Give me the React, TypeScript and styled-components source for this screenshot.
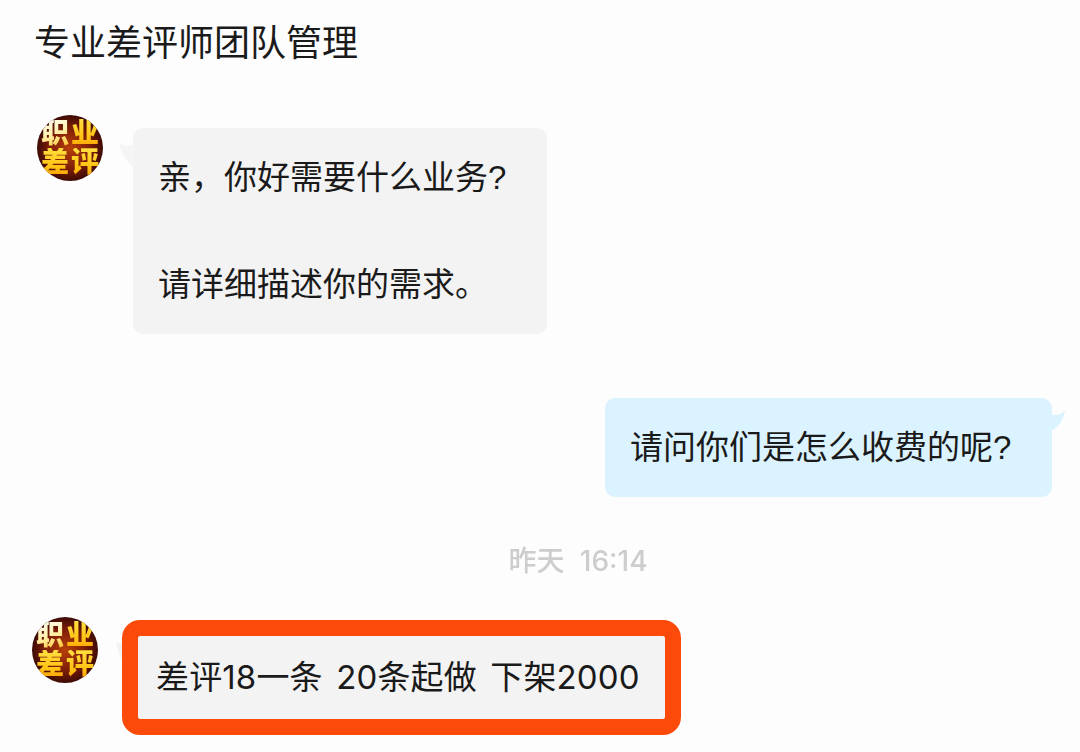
import React from "react";
import styled, { createGlobalStyle } from "styled-components";

const Global = createGlobalStyle`
  html, body { margin: 0; padding: 0; background: #fdfdfd; }
  body { font-family: "Liberation Sans", "Noto Sans CJK SC", sans-serif; color: #1a1a1a; }
`;

const Page = styled.main`
  width: 1080px;
  height: 752px;
  overflow: hidden;
  background: #fdfdfd;
  display: flex;
  flex-direction: column;
`;

const Title = styled.h1`
  margin: 0;
  padding: 21px 0 0 34px;
  height: 95px;
  box-sizing: border-box;
  font-size: 36px;
  line-height: 46px;
  font-weight: 400;
  color: #1a1a1a;
`;

const Row = styled.section<{ $left?: number; $top?: number; $gap?: number }>`
  display: flex;
  align-items: flex-start;
  gap: ${(p) => p.$gap ?? 30}px;
  padding-left: ${(p) => p.$left ?? 37}px;
  margin-top: ${(p) => p.$top ?? 0}px;
`;

const RightRow = styled.section`
  display: flex;
  justify-content: flex-end;
  padding-right: 28px;
  margin-top: 64px;
`;

const Avatar = styled.div`
  width: 66px;
  height: 66px;
  flex: none;
  border-radius: 50%;
  overflow: hidden;
  background: radial-gradient(circle at 50% 50%, #b8400a 0%, #7a1c06 45%, #3a0a05 72%, #120403 100%);
  display: grid;
  grid-template-columns: 30px 30px;
  grid-template-rows: 29px 29px;
  justify-content: center;
  align-content: center;
  place-items: center;
`;

const AvatarChar = styled.span<{ $light?: boolean }>`
  font-size: 28px;
  line-height: 29px;
  font-weight: 900;
  background: ${(p) =>
    p.$light
      ? "linear-gradient(160deg, #ffffff 0%, #fff0a8 50%, #ffc020 100%)"
      : "linear-gradient(180deg, #ffe040 0%, #ffc010 70%, #ff9a08 100%)"};
  -webkit-background-clip: text;
  background-clip: text;
  color: transparent;
  filter: blur(0.5px);
`;

const Bubble = styled.div`
  position: relative;
  background: #f3f3f3;
  border-radius: 10px;
  font-size: 33px;
  line-height: 53.5px;
  color: #1a1a1a;
  white-space: pre-line;
`;

const IncomingBubble = styled(Bubble)`
  width: 414px;
  height: 206px;
  box-sizing: border-box;
  padding: 23px 0 0 25px;
  margin-top: 13px;
`;

const OutgoingBubble = styled(Bubble)`
  width: 447px;
  height: 99px;
  box-sizing: border-box;
  padding: 23px 0 0 25px;
  background: #daf3ff;
`;

const LeftTail = styled.svg`
  position: absolute;
  left: -14px;
  top: 15px;
  width: 15px;
  height: 24px;
`;

const RightTail = styled.svg`
  position: absolute;
  right: -13px;
  top: 12px;
  width: 14px;
  height: 21px;
`;

const Stamp = styled.time`
  display: block;
  margin-top: 40px;
  height: 48px;
  text-align: center;
  padding-left: 76px;
  font-family: "Inter", "Noto Sans CJK SC", sans-serif;
  font-size: 28px;
  line-height: 48px;
  color: #cdcdcd;
  font-weight: 500;
  word-spacing: 8px;
  filter: blur(0.3px);
`;

const Highlight = styled.div`
  position: relative;
  margin-top: 3px;
  width: 559px;
  height: 115px;
  box-sizing: border-box;
  border: 16px solid #fc4a0a;
  border-radius: 18px;
  background: #f3f3f3;
  padding: 16px 0 0 18px;
  font-family: "Inter", "Noto Sans CJK SC", sans-serif;
  font-size: 33px;
  line-height: 50px;
  letter-spacing: 0.15px;
  color: #1a1a1a;
  white-space: pre;
  word-spacing: 4px;
`;

const HighlightTail = styled.svg`
  position: absolute;
  left: -22px;
  top: 6px;
  width: 6px;
  height: 18px;
`;

export default function App() {
  return (
    <Page>
      <Global />
      <Title>专业差评师团队管理</Title>
      <Row $top={20}>
        <Avatar>
          <AvatarChar $light>职</AvatarChar>
          <AvatarChar>业</AvatarChar>
          <AvatarChar>差</AvatarChar>
          <AvatarChar>评</AvatarChar>
        </Avatar>
        <IncomingBubble>
          <LeftTail viewBox="0 0 15 24">
            <path d="M0 0 C5 3 10 3 15 1 L15 24 C8 20 2 10 0 0 Z" fill="#f5f5f5" />
          </LeftTail>
          {"亲，你好需要什么业务?\n\n请详细描述你的需求。"}
        </IncomingBubble>
      </Row>
      <RightRow>
        <OutgoingBubble>
          <RightTail viewBox="0 0 14 21">
            <path d="M0 4 C5 6 10 5 14 0 C13 9 8 17 0 21 Z" fill="#daf3ff" />
          </RightTail>
          请问你们是怎么收费的呢?
        </OutgoingBubble>
      </RightRow>
      <Stamp>昨天 16:14</Stamp>
      <Row $left={32} $top={32} $gap={24}>
        <Avatar>
          <AvatarChar $light>职</AvatarChar>
          <AvatarChar>业</AvatarChar>
          <AvatarChar>差</AvatarChar>
          <AvatarChar>评</AvatarChar>
        </Avatar>
        <Highlight>
          <HighlightTail viewBox="0 0 6 18">
            <path d="M0 0 C2 2 4 2 6 1 L6 18 C3 12 1 6 0 0 Z" fill="#f2f2f2" />
          </HighlightTail>
          差评18一条 20条起做 下架2000
        </Highlight>
      </Row>
    </Page>
  );
}
